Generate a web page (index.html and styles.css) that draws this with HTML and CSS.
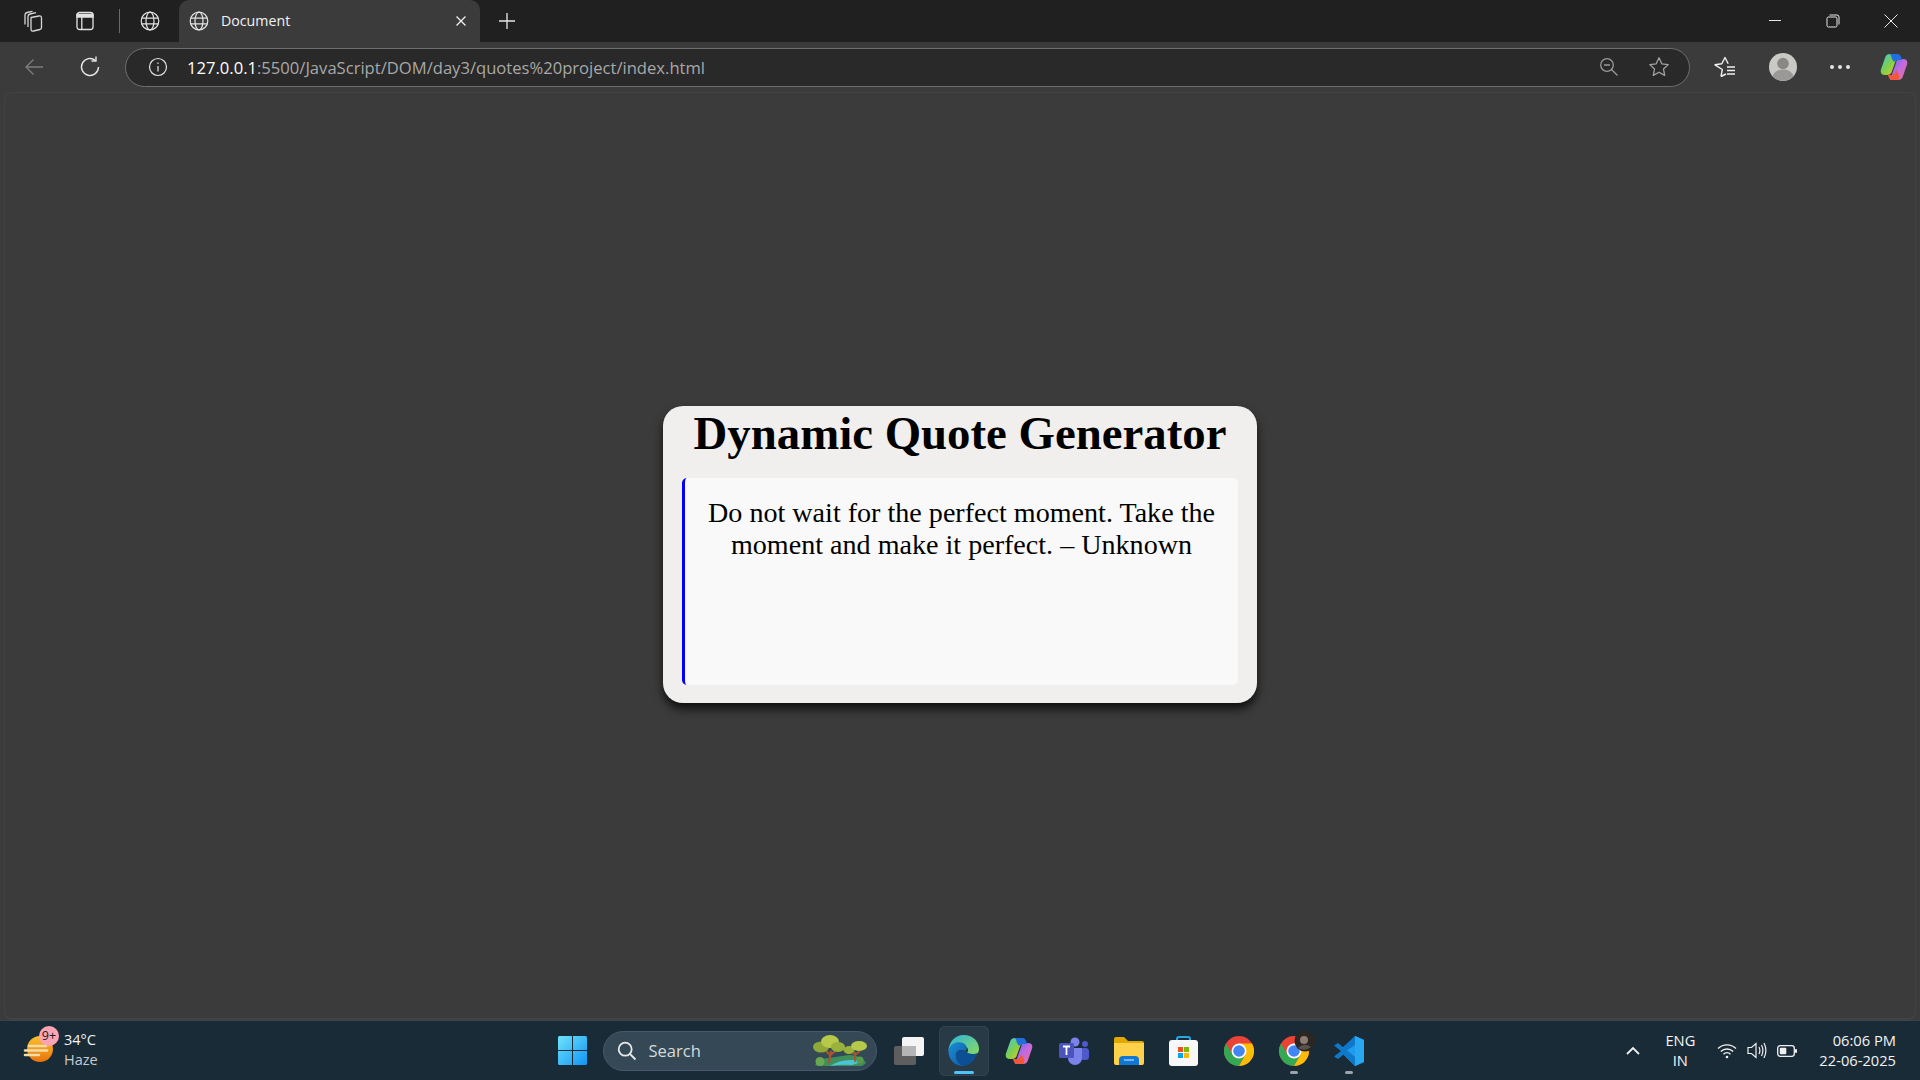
FILE: index.html
```html
<!DOCTYPE html>
<html>
<head>
<meta charset="utf-8">
<title>Document</title>
<link rel="stylesheet" href="styles.css">
</head>
<body>
<div class="window">

    <!-- tab strip -->
    <div class="tabstrip">
        <span class="strip-btn first"><svg width="22" height="22" viewBox="0 0 22 22" fill="none" stroke="#d6d6d6" stroke-width="1.300" stroke-linejoin="round"><path d="M9 7.500l8-1.500q2.500-.3 2.500 2v9.500q0 1.500-1.500 2l-6.500 1.500q-2.500.3-2.500-2z"/><path d="M6 17V6.500Q6 4.500 8 4l6-1.300"/><path d="M3 14.500V5q0-2 2-2.500L10.500 1.300"/></svg></span>
        <span class="strip-btn second"><svg width="18" height="20" viewBox="0 0 18 20" fill="none" stroke="#e2e2e2" stroke-width="1.300"><rect x="1" y="1.500" width="16" height="17" rx="2.500"/><path d="M1 3.500h16v2.500H1z" fill="#e2e2e2"/><path d="M5.800 6v12.500"/></svg></span>
        <span class="strip-sep"></span>
        <span class="strip-btn third"><svg width="20" height="20" viewBox="0 0 20 20" fill="none" stroke="#e4e4e4" stroke-width="1.200"><circle cx="10" cy="10" r="8.800"/><ellipse cx="10" cy="10" rx="4" ry="8.800"/><path d="M1.600 7.200h16.800M1.600 12.800h16.800"/></svg></span>
        <div class="tab">
            <svg width="20" height="20" viewBox="0 0 20 20" fill="none" stroke="#e4e4e4" stroke-width="1.200"><circle cx="10" cy="10" r="8.800"/><ellipse cx="10" cy="10" rx="4" ry="8.800"/><path d="M1.600 7.200h16.800M1.600 12.800h16.800"/></svg>
            <span class="tab-title">Document</span>
            <svg width="12" height="12" viewBox="0 0 12 12" stroke="#f0f0f0" stroke-width="1.300"><path d="M1.500 1.500l9 9M10.500 1.500l-9 9"/></svg>
        </div>
        <svg class="new-tab" width="18" height="18" viewBox="0 0 18 18" stroke="#e8e8e8" stroke-width="1.300"><path d="M9 1v16M1 9h16"/></svg>
        <div class="window-btns">
            <svg width="14" height="14" viewBox="0 0 14 14" stroke="#e8e8e8" stroke-width="1"><path d="M1 6.500h12"/></svg>
            <svg width="14" height="14" viewBox="0 0 14 14" fill="none" stroke="#e8e8e8" stroke-width="1"><rect x="1" y="3" width="10" height="10" rx="1.500"/><path d="M3.500 1h7.500q2 0 2 2v7.500"/></svg>
            <svg width="14" height="14" viewBox="0 0 14 14" stroke="#e8e8e8" stroke-width="1"><path d="M.5.500l13 13M13.500.500l-13 13"/></svg>
        </div>
    </div>

    <!-- address bar row -->
    <div class="toolbar">
        <svg class="back" width="20" height="18" viewBox="0 0 20 18" fill="none" stroke="#7d7d7d" stroke-width="1.300"><path d="M19 9H2M9.500 1.500L2 9l7.500 7.500"/></svg>
        <svg class="reload" width="22" height="22" viewBox="0 0 22 22" fill="none" stroke="#e6e6e6" stroke-width="1.400"><path d="M16.500 4.500A8.500 8.500 0 1 0 19.500 11"/><path d="M17 .5v4.500h-4.500"/></svg>
        <div class="addressbar">
            <svg width="20" height="20" viewBox="0 0 20 20" fill="none" stroke="#e6e6e6" stroke-width="1.200"><circle cx="10" cy="10" r="8.500"/><path d="M10 9v5.500M10 5.500v1.600"/></svg>
            <span class="url"><span class="host">127.0.0.1</span>:5500/JavaScript/DOM/day3/quotes%20project/index.html</span>
            <svg class="zoom-out" width="20" height="20" viewBox="0 0 20 20" fill="none" stroke="#9a9a9a" stroke-width="1.300"><circle cx="8" cy="8" r="6.300"/><path d="M5 8h6M12.500 12.500l6 6"/></svg>
            <svg class="star" width="22" height="22" viewBox="0 0 22 22" fill="none" stroke="#a2a2a2" stroke-width="1.300" stroke-linejoin="round"><path d="M11 1.800l2.800 6 6.400.8-4.700 4.400 1.200 6.400-5.700-3.200-5.700 3.200 1.200-6.400L1.800 8.600l6.400-.8z"/></svg>
        </div>
        <svg class="favs" width="22" height="22" viewBox="0 0 22 22" fill="none" stroke="#f0f0f0" stroke-width="1.400" stroke-linejoin="round"><path d="M7 20.500l1.300-7L1 8.800l6.800-1L11 1.500l3.200 6.300"/><path d="M7 20.500l5-2.500M13 11h8M13 14.500h8M13 18h8"/></svg>
        <span class="avatar"><svg width="28" height="28" viewBox="0 0 28 28"><circle cx="14" cy="14" r="14" fill="#cbc9c6"/><circle cx="14" cy="10.500" r="5.800" fill="#8a8886"/><path d="M3.500 23c2-4.800 6-6.500 10.500-6.500s8.500 1.700 10.500 6.500a14 14 0 0 1-21 0z" fill="#9b9997"/></svg></span>
        <span class="dots"><i></i><i></i><i></i></span>
        <svg class="copilot" width="28" height="28" viewBox="0 0 28 28">
            <defs>
                <linearGradient id="cpA" x1="0" y1="0" x2="1" y2="1"><stop offset="0" stop-color="#3dc6e8"/><stop offset=".5" stop-color="#7fd04a"/><stop offset="1" stop-color="#f6c52c"/></linearGradient>
                <linearGradient id="cpB" x1="0" y1="0" x2="1" y2="1"><stop offset="0" stop-color="#5a6cf0"/><stop offset=".5" stop-color="#c46ae0"/><stop offset="1" stop-color="#f0708c"/></linearGradient>
            </defs>
            <path d="M10 1h8l-6 17q-1 4-5 4H5Q0 22 .8 17L5 5q1-4 5-4z" fill="url(#cpA)"/>
            <path d="M18 6h5q5 0 4.200 5L23 23q-1 4-5 4h-8l6-17q.8-4 2-4z" fill="url(#cpB)"/>
            <path d="M10 1h8q2 0 3 3l1 3h-5q-2 0-3 2L12 6q-.5-3-2-5z" fill="#1f6fe0"/>
            <path d="M8 22h4q2 0 3-2l1-3 3 5q1 4-1 5h-6q-3 0-4-5z" fill="#f0573c"/>
        </svg>
    </div>

    <!-- page -->
    <main class="page">
        <div class="container">
            <h1>Dynamic Quote Generator</h1>
            <blockquote class="quote">Do not wait for the perfect moment. Take the moment and make it perfect. – Unknown</blockquote>
        </div>
    </main>

    <!-- windows taskbar -->
    <footer class="taskbar">
        <div class="weather">
            <span class="weather-icon">
                <svg width="34" height="34" viewBox="0 0 34 34">
                    <defs><linearGradient id="sun" x1="0" y1="0" x2="0" y2="1"><stop offset="0" stop-color="#fcc22c"/><stop offset="1" stop-color="#e8730c"/></linearGradient></defs>
                    <circle cx="17" cy="18" r="13" fill="url(#sun)"/>
                    <path d="M6 15h17M2 19.500h22M2 24h14" stroke="#f2dca8" stroke-width="2.600" stroke-linecap="round"/>
                </svg>
                <span class="badge">9+</span>
            </span>
            <div class="weather-text"><span>34°C</span><span class="dim">Haze</span></div>
        </div>

        <div class="task-icons">
            <span class="task"><svg width="29" height="29" viewBox="0 0 29 29"><defs><linearGradient id="win" x1="0" y1="0" x2="1" y2="1"><stop offset="0" stop-color="#6fe3fb"/><stop offset="1" stop-color="#0f94f3"/></linearGradient></defs><path d="M0 1.500Q0 0 1.500 0H14v14H0zM15 0h12.500Q29 0 29 1.500V14H15zM0 15h14v14H1.500Q0 29 0 27.500zM15 15h14v12.500q0 1.500-1.500 1.500H15z" fill="url(#win)"/></svg></span>
            <div class="search">
                <svg width="20" height="20" viewBox="0 0 20 20" fill="none" stroke="#e6e9eb" stroke-width="1.800"><circle cx="8.200" cy="8.200" r="6.500"/><path d="M13 13l5.500 5.500"/></svg>
                <span class="search-label">Search</span>
                <svg class="search-art" width="56" height="32" viewBox="0 0 56 32">
                    <path d="M3 30q4-7 14-7l20-3q12 0 17 8l-4 3H6z" fill="#3f8f5a"/>
                    <path d="M18 31q10-7 24-6l8 2-10 3q-10-1-22 1z" fill="#4cc4d8"/>
                    <path d="M17 28l2-12M18 20l-6-6M18.500 20l7-6" stroke="#a8552f" stroke-width="2.200" fill="none"/>
                    <ellipse cx="9" cy="12" rx="8" ry="5.500" fill="#8fa838"/>
                    <ellipse cx="18" cy="6.500" rx="9" ry="6.500" fill="#b7c94a"/>
                    <ellipse cx="26" cy="12" rx="7" ry="5" fill="#98b23c"/>
                    <path d="M43 27v-10M43 20l-4-4M43 20l5-4" stroke="#a8552f" stroke-width="1.700" fill="none"/>
                    <ellipse cx="37" cy="15" rx="5.500" ry="4" fill="#98b23c"/>
                    <ellipse cx="47" cy="11" rx="8" ry="5" fill="#b7c94a"/>
                    <circle cx="8" cy="26.500" r="4.500" fill="#6aa84f"/>
                    <circle cx="48" cy="25" r="3.500" fill="#5b9a4a"/>
                </svg>
            </div>
            <span class="task"><svg width="30" height="28" viewBox="0 0 30 28"><rect x="0" y="9" width="22" height="19" rx="2" fill="#5e5e5e"/><rect x="8" y="0" width="22" height="19" rx="2" fill="#f4f4f4"/><rect x="8" y="9" width="14" height="10" fill="#b5b5b5"/></svg></span>
            <span class="task active">
                <svg width="31" height="31" viewBox="0 0 31 31">
                    <defs>
                        <linearGradient id="edgeA" x1="0" y1="0" x2="1" y2="1"><stop offset="0" stop-color="#2bb3de"/><stop offset="1" stop-color="#8ddc5a"/></linearGradient>
                        <linearGradient id="edgeB" x1="0" y1="0" x2="1" y2="1"><stop offset="0" stop-color="#1a8fd8"/><stop offset="1" stop-color="#0c59a4"/></linearGradient>
                    </defs>
                    <path d="M15.500 0C26 0 31 7.500 31 14c0 4-3 6.500-7 6.500-3.500 0-5.500-1-5.500-2.500 3-1.500 2-7-3.500-7C9 11 4 14 .5 15.500 1 7 7 0 15.500 0z" fill="url(#edgeA)"/>
                    <path d="M.5 15C2 9 8 6.500 13 7.500c6 1 7 6.500 4 8.500-4-2-10-1-9 6 .5 4 4 7.500 9 9C8 32 0 25 .5 15z" fill="url(#edgeB)"/>
                    <path d="M8 20c0-4 4-6 9-4 2 2 5 3 8 3 2 0 3-.5 4-1-2 8-8 13-14 13-4-1-7-6-7-11z" fill="#0d4f94"/>
                </svg>
                <i class="run-bar long"></i>
            </span>
            <span class="task"><svg width="28" height="28" viewBox="0 0 28 28"><path d="M10 1h8l-6 17q-1 4-5 4H5Q0 22 .8 17L5 5q1-4 5-4z" fill="url(#cpA)"/><path d="M18 6h5q5 0 4.200 5L23 23q-1 4-5 4h-8l6-17q.8-4 2-4z" fill="url(#cpB)"/><path d="M10 1h8q2 0 3 3l1 3h-5q-2 0-3 2L12 6q-.5-3-2-5z" fill="#1f6fe0"/><path d="M8 22h4q2 0 3-2l1-3 3 5q1 4-1 5h-6q-3 0-4-5z" fill="#f0573c"/></svg></span>
            <span class="task"><svg width="30" height="28" viewBox="0 0 30 28"><circle cx="16" cy="5" r="4.500" fill="#7b83eb"/><circle cx="26" cy="7" r="3" fill="#5059c9"/><rect x="21" y="11" width="9" height="12" rx="3.500" fill="#5059c9"/><path d="M9 11h14v10a7 7 0 0 1-14 0z" fill="#7b83eb"/><rect x="0" y="6" width="15" height="15" rx="1.500" fill="#4b53bc"/><path d="M4 9.500h7M7.500 9.500V18" stroke="#fff" stroke-width="1.800"/></svg></span>
            <span class="task"><svg width="30" height="28" viewBox="0 0 30 28"><path d="M0 2q0-2 2-2h8l4 4h14q2 0 2 2v4H0z" fill="#e0a800"/><path d="M0 6h30v20q0 2-2 2H2q-2 0-2-2z" fill="#fdd14a"/><path d="M5 28v-5q0-4 4-4h12q4 0 4 4v5z" fill="#0f78d4"/><path d="M10 23h10" stroke="#9fd0f5" stroke-width="1.400"/></svg></span>
            <span class="task"><svg width="29" height="30" viewBox="0 0 29 30"><path d="M8 6V3q0-2 2-2h9q2 0 2 2v3" fill="none" stroke="#23a9e8" stroke-width="2"/><rect x="0" y="4" width="29" height="26" rx="3" fill="#f8f8f8"/><path d="M9 11h5v5H9z" fill="#f25022"/><path d="M15 11h5v5h-5z" fill="#7fba00"/><path d="M9 17h5v5H9z" fill="#00a4ef"/><path d="M15 17h5v5h-5z" fill="#ffb900"/></svg></span>
            <span class="task"><svg width="30" height="30" viewBox="0 0 30 30"><circle cx="15" cy="15" r="15" fill="#ea4335"/><path d="M2 7.500A15 15 0 0 0 15 30l6.500-11.250H8.500z" fill="#34a853"/><path d="M15 7.500h13A15 15 0 0 1 15 30l6.500-11.250z" fill="#fbbc05"/><circle cx="15" cy="15" r="7.500" fill="#fff"/><circle cx="15" cy="15" r="5.800" fill="#4285f4"/></svg></span>
            <span class="task">
                <svg class="chrome-user" width="30" height="30" viewBox="0 0 30 30"><circle cx="15" cy="15" r="15" fill="#ea4335"/><path d="M2 7.500A15 15 0 0 0 15 30l6.500-11.250H8.500z" fill="#34a853"/><path d="M15 7.500h13A15 15 0 0 1 15 30l6.500-11.250z" fill="#fbbc05"/><circle cx="15" cy="15" r="7.500" fill="#fff"/><circle cx="15" cy="15" r="5.800" fill="#4285f4"/><circle cx="26" cy="5" r="10.500" fill="#2a2623"/><circle cx="25" cy="4" r="4" fill="#8d7a70"/><path d="M19 12q6-6 13-1-6 5-13 1z" fill="#5d5249"/></svg>
                <i class="run-bar"></i>
            </span>
            <span class="task">
                <svg width="30" height="30" viewBox="0 0 30 30"><path d="M21 0l9 4v22l-9 4L8 17l13-17z" fill="#1f9cf0"/><path d="M21 0v30L9.500 18.500 4 23 0 20.500 7 15 0 9.500 4 7l17 14V9L12 15 8 12z" fill="#0f78c8"/><path d="M21 0l9 4v22l-9 4z" fill="#28a7f2"/></svg>
                <i class="run-bar"></i>
            </span>
        </div>

        <div class="tray">
            <svg width="14" height="9" viewBox="0 0 14 9" fill="none" stroke="#f0f0f0" stroke-width="1.800"><path d="M1 8l6-6 6 6"/></svg>
            <div class="lang"><span>ENG</span><span>IN</span></div>
            <svg class="wifi" width="20" height="16" viewBox="0 0 20 16" fill="none" stroke="#f0f0f0" stroke-width="1.400"><path d="M1 5.500a13 13 0 0 1 18 0M3.800 8.500a9 9 0 0 1 12.400 0M6.500 11.200a5 5 0 0 1 7 0"/><circle cx="10" cy="14" r="1.300" fill="#f0f0f0" stroke="none"/></svg>
            <svg class="volume" width="20" height="17" viewBox="0 0 20 17" fill="none" stroke="#f0f0f0" stroke-width="1.200"><path d="M1 5.500h3.500L9 1.500v14l-4.500-4H1z"/><path d="M12 5q1.800 3.500 0 7M14.500 3q2.800 5.500 0 11M17 1q3.800 7.500 0 15"/></svg>
            <svg class="battery" width="20" height="12" viewBox="0 0 20 12"><rect x=".7" y=".7" width="16.600" height="10.600" rx="2.500" fill="none" stroke="#f0f0f0" stroke-width="1.300"/><rect x="2.800" y="2.800" width="6.500" height="6.400" rx="1" fill="#f0f0f0"/><rect x="18" y="4" width="2" height="4" rx="1" fill="#f0f0f0"/></svg>
            <div class="clock"><span>06:06 PM</span><span>22-06-2025</span></div>
        </div>
    </footer>
</div>
</body>
</html>
```

FILE: styles.css
```css
* {
    margin: 0;
    padding: 0;
    box-sizing: border-box;
}

body {
    font-family: "Open Sans", "Noto Sans", sans-serif;
    background-color: #3b3b3b;
    overflow: hidden;
}

svg {
    display: block;
    flex: none;
}

.window {
    width: 1920px;
    height: 1080px;
    display: flex;
    flex-direction: column;
}

/* tab strip */
.tabstrip {
    height: 42px;
    flex: none;
    background-color: #202020;
    display: flex;
    align-items: center;
}

.strip-btn {
    display: flex;
    justify-content: center;
}

.strip-btn.first {
    margin-left: 22px;
    width: 22px;
}

.strip-btn.second {
    margin-left: 30px;
    width: 22px;
}

.strip-sep {
    width: 1px;
    height: 24px;
    background-color: #6a6a6a;
    margin-left: 23px;
}

.strip-btn.third {
    margin-left: 20px;
    width: 20px;
}

.tab {
    width: 301px;
    height: 42px;
    margin-left: 19px;
    background-color: #3b3b3b;
    border-radius: 10px 10px 0 0;
    display: flex;
    align-items: center;
    padding: 0 13px 0 10px;
}

.tab-title {
    font-size: 14.200px;
    color: #f2f2f2;
    margin-left: 12px;
    margin-bottom: 1px;
    flex: 1;
}

.new-tab {
    margin-left: 18px;
}

.window-btns {
    margin-left: auto;
    display: flex;
    gap: 44px;
    padding-right: 22px;
}

/* toolbar */
.toolbar {
    height: 50px;
    flex: none;
    background-color: #3b3b3b;
    display: flex;
    align-items: center;
}

.back {
    margin-left: 24px;
}

.reload {
    margin-left: 35px;
}

.addressbar {
    width: 1565px;
    height: 39px;
    margin-left: 24px;
    background-color: #292929;
    border: 1px solid #6e6e6e;
    border-radius: 20px;
    display: flex;
    align-items: center;
    padding: 0 19px 0 22px;
}

.url {
    font-size: 16.600px;
    color: #a8a8a8;
    margin-left: 19px;
    white-space: nowrap;
}

.host {
    color: #fff;
}

.zoom-out {
    margin-left: auto;
}

.star {
    margin-left: 29px;
}

.favs {
    margin-left: 24px;
}

.avatar {
    margin-left: 33px;
}

.dots {
    margin-left: 33px;
    display: flex;
    gap: 4px;
}

.dots i {
    width: 4px;
    height: 4px;
    border-radius: 50%;
    background-color: #e4e4e4;
}

.copilot {
    margin-left: 30px;
}

/* page */
.page {
    flex: 1;
    display: flex;
    justify-content: center;
    align-items: center;
    border: 1px solid #424242;
    border-bottom-width: 2px;
    border-radius: 8px;
    margin: 0 4px;
    padding-bottom: 3px;
}

.container {
    width: 594px;
    height: 297px;
    background-color: #f0efee;
    border-radius: 20px;
    box-shadow: 0 6px 10px rgba(0, 0, 0, 0.75);
    padding: 0 19px;
    font-family: "Liberation Serif", serif;
    color: #000;
    text-align: center;
}

.container h1 {
    font-size: 46.800px;
    line-height: 55px;
    margin-bottom: 17px;
}

.quote {
    height: 207px;
    background-color: #f9f9f9;
    border-left: 3px solid #0000ff;
    border-radius: 5px;
    padding: 19px 20px;
    font-size: 28.100px;
    line-height: 32px;
}

/* taskbar */
.taskbar {
    height: 60px;
    flex: none;
    background-color: #1a2b38;
    border-top: 1px solid #39444d;
    display: grid;
    grid-template-columns: 1fr auto 1fr;
    align-items: center;
}

.weather {
    display: flex;
    align-items: center;
    padding-left: 23px;
}

.weather-icon {
    position: relative;
    width: 34px;
    margin-bottom: 6px;
}

.badge {
    position: absolute;
    top: -5px;
    left: 16px;
    width: 20px;
    height: 20px;
    border-radius: 50%;
    background-color: #fba4b4;
    color: #1a1a1a;
    font-size: 12.500px;
    line-height: 20px;
    text-align: center;
}

.weather-text {
    margin-left: 7px;
    margin-bottom: 2px;
    display: flex;
    flex-direction: column;
    font-size: 14.500px;
    line-height: 20px;
    color: #f2f4f5;
}

.weather-text .dim {
    color: #c5cbcf;
}

.task-icons {
    display: flex;
    align-items: center;
    padding-left: 6px;
}

.task {
    position: relative;
    width: 50px;
    height: 50px;
    margin-right: 5px;
    border-radius: 6px;
    display: flex;
    justify-content: center;
    align-items: center;
}

.task.active {
    background-color: #293a47;
    box-shadow: inset 0 0 0 1px #324350;
}

.chrome-user {
    overflow: visible;
}

.run-bar {
    position: absolute;
    bottom: 2px;
    left: 21px;
    width: 8px;
    height: 3px;
    border-radius: 2px;
    background-color: #9aa3aa;
}

.run-bar.long {
    left: 15px;
    width: 20px;
    background-color: #4fc3f7;
}

.search {
    width: 274px;
    height: 40px;
    margin-right: 7px;
    background-color: #344955;
    border: 1px solid #46586a;
    border-radius: 20px;
    display: flex;
    align-items: center;
    padding: 0 8px 0 13px;
}

.search-label {
    font-size: 16.500px;
    color: #d5dadd;
    margin-left: 12px;
}

.search-art {
    margin-left: auto;
}

.tray {
    display: flex;
    align-items: center;
    justify-content: flex-end;
    color: #f2f4f5;
    font-size: 14.700px;
    line-height: 20px;
    padding-right: 24px;
}

.lang {
    margin-left: 15px;
    margin-bottom: 2px;
    width: 50px;
    display: flex;
    flex-direction: column;
    align-items: center;
}

.wifi {
    margin-left: 12px;
}

.volume {
    margin-left: 10px;
}

.battery {
    margin-left: 10px;
}

.clock {
    margin-left: 22px;
    margin-bottom: 2px;
    display: flex;
    flex-direction: column;
    align-items: flex-end;
}
```
